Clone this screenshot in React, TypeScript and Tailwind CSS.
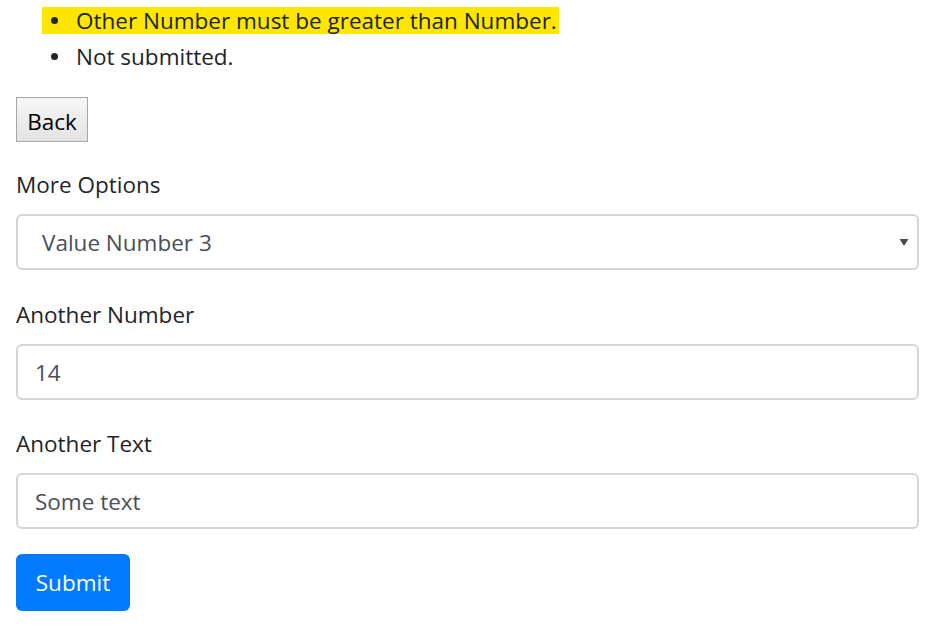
import React from "react";

export default function App() {
  return (
    <div
      className="w-[942px] h-[630px] bg-white text-[#212529] text-[22.5px] leading-[33px] overflow-hidden"
      style={{ fontFamily: '"Open Sans", "Noto Sans", sans-serif' }}
    >
      <div className="pl-4 w-[919px]">
        <ul className="pt-[2px]">
          <li className="h-[36px] flex items-center">
            <span className="flex items-center h-[27px] bg-[#ffe600] ml-[26px] pr-[2px]">
              <span className="w-[7px] h-[7px] rounded-full bg-[#212529] ml-[9px] mr-[18px]" />
              <span>Other Number must be greater than Number.</span>
            </span>
          </li>
          <li className="h-[36px] flex items-center">
            <span className="flex items-center ml-[26px]">
              <span className="w-[7px] h-[7px] rounded-full bg-[#212529] ml-[9px] mr-[18px]" />
              <span>Not submitted.</span>
            </span>
          </li>
        </ul>
        <button className="mt-[23px] h-[45px] w-[72px] border border-[#a6a6a6] bg-gradient-to-b from-[#f6f6f6] to-[#e3e3e3] text-black text-[22.5px] leading-[33px] pt-[3px] flex items-center justify-center">
          Back
        </button>

        <div className="mt-[28px]">
          <label className="block h-[33px] leading-[30px]">More Options</label>
          <div className="mt-[11px] h-[56px] border-2 border-[#d2d6da] rounded-[6px] flex items-center justify-between pl-[24px] pr-[8px] text-[#495057]">
            <span>Value Number 3</span>
            <svg width="10" height="10" viewBox="0 0 10 10">
              <path d="M0.5 2 L9.5 2 L5 9 Z" fill="#4a4f55" />
            </svg>
          </div>
        </div>

        <div className="mt-[30px]">
          <label className="block h-[33px] leading-[30px]">Another Number</label>
          <div className="mt-[11px] h-[56px] border-2 border-[#d2d6da] rounded-[6px] flex items-center pl-[17px] text-[#495057]">
            14
          </div>
        </div>

        <div className="mt-[29px]">
          <label className="block h-[33px] leading-[30px]">Another Text</label>
          <div className="mt-[11px] h-[56px] border-2 border-[#d2d6da] rounded-[6px] flex items-center pl-[17px] text-[#495057]">
            Some text
          </div>
        </div>

        <button className="mt-[25px] h-[57px] w-[114px] rounded-[6px] bg-[#007bff] text-white text-[22.5px] flex items-center justify-center">
          Submit
        </button>
      </div>
    </div>
  );
}
